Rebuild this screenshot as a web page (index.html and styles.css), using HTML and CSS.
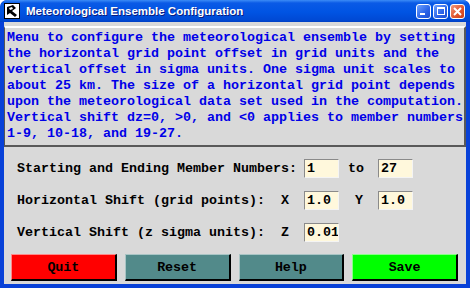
FILE: index.html
```html
<!DOCTYPE html>
<html lang="en">
<head>
  <meta charset="UTF-8" />
  <title>Meteorological Ensemble Configuration</title>
  <link rel="stylesheet" href="styles.css">
</head>
<body>
  <div class="window">
    <div class="titlebar">
      <svg class="appicon" width="16" height="16" viewBox="0 0 16 16">
        <rect x="0.5" y="0.5" width="15" height="15" fill="#fff" stroke="#000"/>
        <path d="M3 4 L9 2 L12 5 L8 8 L13 12 L11 14 L6 10 L3 12 Z" fill="#000"/>
        <path d="M5 5 L8 4 L9 6 L6 7 Z" fill="#fff"/>
      </svg>
      <span class="title">Meteorological Ensemble Configuration</span>
      <div class="controls">
        <span class="ctl"><span class="min"></span></span>
        <span class="ctl"><span class="max"></span></span>
        <span class="ctl close">
          <svg width="9" height="9" viewBox="0 0 9 9"><path d="M1 1 L8 8 M8 1 L1 8" stroke="#fff" stroke-width="2"/></svg>
        </span>
      </div>
    </div>

    <div class="client">
      <div class="message">Menu to configure the meteorological ensemble by setting
the horizontal grid point offset in grid units and the
vertical offset in sigma units. One sigma unit scales to
about 25 km. The size of a horizontal grid point depends
upon the meteorological data set used in the computation.
Vertical shift dz=0, &gt;0, and &lt;0 applies to member numbers
1-9, 10-18, and 19-27.</div>

      <div class="form">
        <span class="label wide">Starting and Ending Member Numbers:</span>
        <input class="entry" type="text" value="1" />
        <span class="sep to">to</span>
        <input class="entry" type="text" value="27" />

        <span class="label">Horizontal Shift (grid points):</span>
        <span class="axis">X</span>
        <input class="entry" type="text" value="1.0" />
        <span class="sep">Y</span>
        <input class="entry" type="text" value="1.0" />

        <span class="label">Vertical Shift (z sigma units):</span>
        <span class="axis">Z</span>
        <input class="entry" type="text" value="0.01" />
      </div>

      <div class="buttons">
        <button class="btn quit">Quit</button>
        <button class="btn plain">Reset</button>
        <button class="btn plain">Help</button>
        <button class="btn save">Save</button>
      </div>
    </div>
  </div>
</body>
</html>
```

FILE: styles.css
```css
body {
  margin: 0;
  background: #fff;
}
.window {
  width: 470px;
  height: 288px;
  box-sizing: border-box;
  background: #0841d8;
  border-radius: 7px 7px 0 0;
  padding: 0 4px 4px 4px;
  display: flex;
  flex-direction: column;
  overflow: hidden;
}
.titlebar {
  height: 22px;
  margin: 0 -4px;
  padding: 0 5px 0 4px;
  display: flex;
  align-items: center;
  background: linear-gradient(#3c8cf6 0, #0a5ae6 3px, #0054e3 12px, #0049d4 20px, #0040c4 22px);
  border-radius: 7px 7px 0 0;
}
.appicon {
  flex: none;
}
.title {
  margin-left: 6px;
  color: #fff;
  font: bold 11.5px "Liberation Sans", sans-serif;
  text-shadow: 1px 1px #0a1c80;
  flex: 1;
}
.controls {
  display: flex;
  gap: 2px;
}
.ctl {
  width: 13px;
  height: 13px;
  border: 1px solid #fff;
  border-radius: 3px;
  background: linear-gradient(135deg, #6ea2ff, #2a63e8 60%, #1d4fd0);
  display: flex;
  align-items: center;
  justify-content: center;
  position: relative;
}
.ctl .min {
  width: 5px;
  height: 2px;
  background: #fff;
  position: absolute;
  left: 3px;
  bottom: 3px;
}
.ctl .max {
  width: 6px;
  height: 5px;
  border: 1px solid #fff;
  border-top-width: 2px;
}
.ctl.close {
  background: linear-gradient(135deg, #f09a7e, #e2572f 55%, #c93e18);
}
.client {
  flex: 1;
  background: #d9d9d9;
  padding-top: 4px;
  display: flex;
  flex-direction: column;
}
.message {
  height: 115px;
  border-top: 2px solid #fff;
  border-left: 1px solid #555;
  border-right: 2px solid #595959;
  border-bottom: 2px solid #595959;
  padding: 2px 0 0 2px;
  white-space: pre;
  color: #0000e8;
  font: bold 13.33px/16px "Liberation Mono", monospace;
}
.form {
  display: grid;
  grid-template-columns: 264px 23px 35px 39px 35px;
  grid-auto-rows: 19px;
  row-gap: 13px;
  align-items: center;
  padding: 12px 0 0 13px;
  font: bold 13.33px "Liberation Mono", monospace;
  color: #000;
}
.label {
  grid-column: 1;
  white-space: nowrap;
}
.label.wide {
  grid-column: 1 / span 2;
}
.axis {
  grid-column: 2;
}
.sep {
  padding-left: 16px;
}
.sep.to {
  padding-left: 9px;
}
.entry {
  width: 35px;
  height: 19px;
  box-sizing: border-box;
  margin: 0;
  padding: 0 0 0 2px;
  border: 1px solid;
  border-color: #8a8a8a #f4f4f4 #f4f4f4 #8a8a8a;
  background: #fff8dc;
  font: bold 13.33px "Liberation Mono", monospace;
  color: #000;
  outline: none;
}
.buttons {
  display: flex;
  gap: 8px;
  padding: 12px 8px 0 7px;
}
.btn {
  flex: 1;
  height: 27px;
  margin: 0;
  border: 1px solid;
  border-right-width: 2px;
  border-bottom-width: 2px;
  font: bold 13.33px "Liberation Mono", monospace;
  color: #000;
  cursor: pointer;
}
.quit {
  background: #ff0000;
  border-color: #ff8a8a #000 #000 #ff8a8a;
}
.plain {
  background: #528a8a;
  border-color: #a9c5c5 #000 #000 #a9c5c5;
}
.save {
  background: #00ff00;
  border-color: #8aff8a #000 #000 #8aff8a;
}
```
